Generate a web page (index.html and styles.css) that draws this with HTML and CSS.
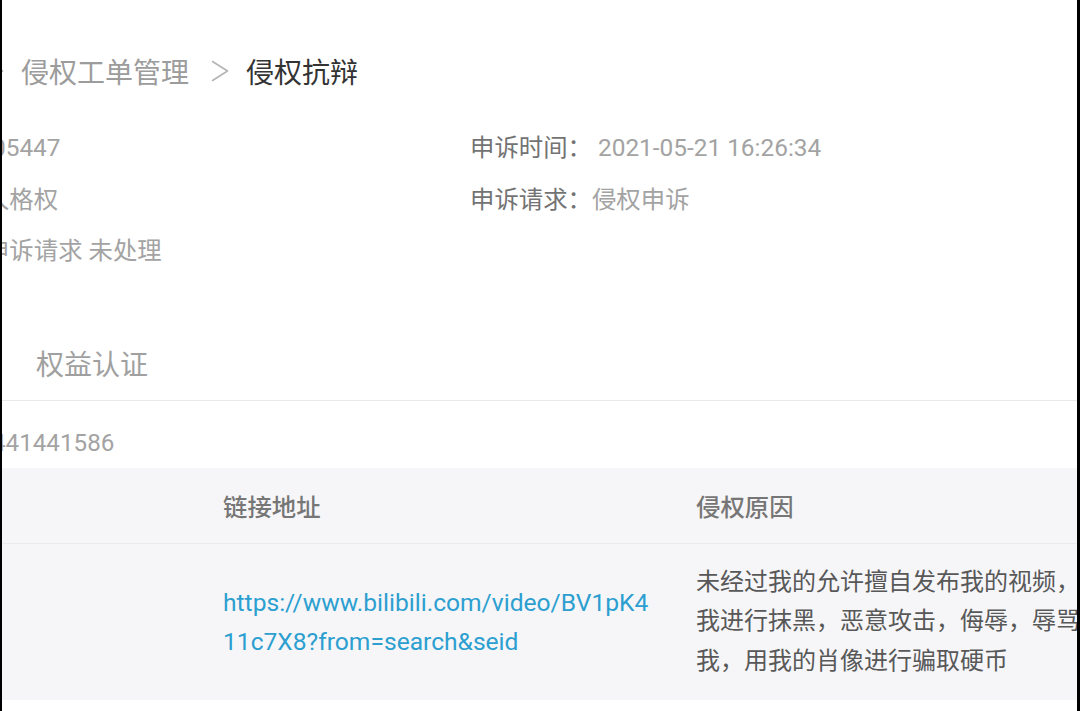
FILE: index.html
```html
<!DOCTYPE html>
<html lang="zh-CN">
<head>
<meta charset="utf-8">
<title>侵权抗辩</title>
<link rel="stylesheet" href="styles.css">
</head>
<body>
<div class="screen">
  <div class="page">
    <nav class="crumbs">
      <span class="crumb">首页</span>
      <svg class="chev" viewBox="0 0 18 22" width="18" height="22"><polyline points="1.5,1.5 16.5,11 1.5,20.5"/></svg>
      <span class="crumb">侵权工单管理</span>
      <svg class="chev" viewBox="0 0 18 22" width="18" height="22"><polyline points="1.5,1.5 16.5,11 1.5,20.5"/></svg>
      <span class="crumb current">侵权抗辩</span>
    </nav>

    <section class="info">
      <div class="info-col">
        <div class="info-row"><span class="k">申诉编号：</span><span class="v id">05447</span></div>
        <div class="info-row"><span class="k">侵权类型：</span><span class="v">人格权</span></div>
        <div class="info-row"><span class="k">处理状态：</span><span class="v">申诉请求 未处理</span></div>
      </div>
      <div class="info-col">
        <div class="info-row"><span class="k dark">申诉时间：</span><span class="v date">2021-05-21 16:26:34</span></div>
        <div class="info-row"><span class="k dark">申诉请求：</span><span class="v">侵权申诉</span></div>
      </div>
    </section>

    <div class="tabs">
      <span class="tab">权益认证</span>
    </div>

    <div class="uid"><span class="v">441441586</span></div>

    <div class="table">
      <div class="tr th">
        <div class="td c1"></div>
        <div class="td c2">链接地址</div>
        <div class="td c3">侵权原因</div>
      </div>
      <div class="tr tb">
        <div class="td c1"></div>
        <div class="td c2"><span class="link">https://www.bilibili.com/video/BV1pK411c7X8?from=search&amp;seid</span></div>
        <div class="td c3 reason">未经过我的允许擅自发布我的视频，对<br>我进行抹黑，恶意攻击，侮辱，辱骂<br>我，用我的肖像进行骗取硬币</div>
      </div>
    </div>
  </div>
</div>
</body>
</html>
```

FILE: styles.css
```css
html, body {
  margin: 0;
  padding: 0;
  height: 100%;
}
body {
  background: #000;
  font-family: Roboto, "Noto Sans CJK SC", sans-serif;
  overflow: hidden;
}
.screen {
  margin: 0 3px 0 2px;
  height: 711px;
  background: #fff;
  overflow: hidden;
}
.page {
  margin-left: -162px;
  padding-top: 51px;
}

/* breadcrumb */
.crumbs {
  display: flex;
  align-items: center;
  height: 40px;
  padding-left: 68px;
  font-size: 28px;
  color: #9c9c9c;
  white-space: nowrap;
}
.chev {
  flex: none;
  margin: 0 17px 0 22px;
  fill: none;
  stroke: #b4b4b4;
  stroke-width: 1.6;
  stroke-linecap: round;
  stroke-linejoin: round;
}
.crumb.current {
  color: #333;
}

/* info block */
.info {
  display: grid;
  grid-template-columns: 607px 1fr;
  padding-left: 23px;
  margin-top: 40px;
  font-size: 24.4px;
  white-space: nowrap;
}
.info-col {
  display: flex;
  flex-direction: column;
  gap: 17.5px;
}
.info-row {
  display: flex;
  line-height: 34px;
}
.k {
  color: #9e9e9e;
}
.k.dark {
  color: #737373;
}
.v {
  color: #a3a3a3;
}
.v.id {
  padding-left: 7px;
}
.v.date {
  margin-left: 6px;
}

/* tabs */
.tabs {
  margin-top: 78px;
  padding-left: 196px;
  padding-bottom: 14px;
  border-bottom: 1px solid #e9e9e9;
}
.tab {
  display: inline-block;
  font-size: 28px;
  line-height: 40px;
  color: #a0a0a0;
}

.uid {
  margin-top: 25px;
  padding-left: 152px;
  font-size: 24.2px;
  line-height: 34px;
}

/* table */
.table {
  margin-top: 8px;
  background: #f6f6f8;
}
.tr {
  display: grid;
  grid-template-columns: 359px 473px 1fr;
}
.th {
  height: 75px;
  align-items: center;
  border-bottom: 1px solid #ebebed;
  font-size: 24.4px;
  font-weight: 500;
  color: #767676;
}
.tb {
  height: 156px;
  align-items: center;
}
.td.c2 {
  padding: 0 19px 0 24px;
}
.td.c3 {
  padding-left: 24px;
  white-space: nowrap;
}
.link {
  display: block;
  font-size: 24.6px;
  line-height: 39.5px;
  color: #2c9fd0;
  word-break: break-all;
}
.reason {
  font-size: 24px;
  line-height: 39.5px;
  color: #585858;
}
```
